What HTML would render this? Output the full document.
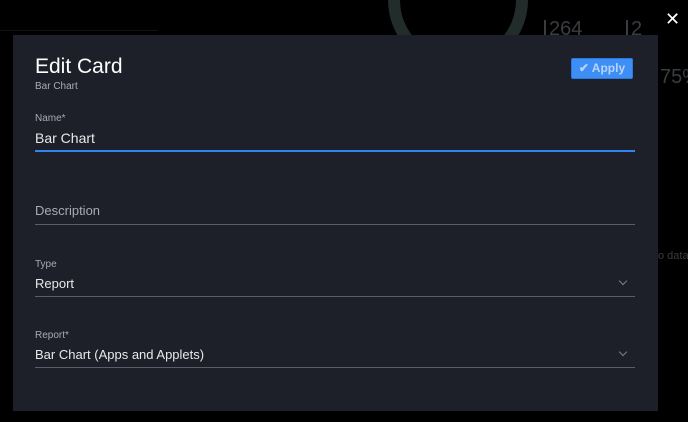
<!DOCTYPE html>
<html><head><style>
body{margin:0;width:688px;height:422px;background:#000;position:relative;overflow:hidden;font-family:"Liberation Sans",sans-serif;}
.dlg{position:absolute;left:13px;top:35px;width:645px;height:376px;background:#1d2029;}
.t{position:absolute;color:#fff;white-space:nowrap;}
.lab{position:absolute;left:22px;font-size:10px;color:#a8abb2;}
.val{position:absolute;left:22px;font-size:14px;color:#e8e9eb;}
.line{position:absolute;left:22px;width:600px;height:1px;background:#5a5e66;}
.chev{position:absolute;left:607px;width:5px;height:5px;border-right:1px solid #7a7e85;border-bottom:1px solid #7a7e85;transform:rotate(45deg);}
</style></head><body>
<div style="position:absolute;left:388px;top:-70px;width:116px;height:116px;border:12px solid #222c2b;border-radius:50%;"></div>
<div style="position:absolute;left:0;top:30px;width:158px;height:1px;background:#1a1010"></div>
<div style="position:absolute;left:544px;top:20px;width:2px;height:20px;background:#3a3d40"></div>
<div class="t" style="left:549px;top:18px;font-size:20px;color:#3a3d40">264</div>
<div style="position:absolute;left:626px;top:20px;width:2px;height:20px;background:#3a3d40"></div>
<div class="t" style="left:631px;top:18px;font-size:20px;color:#3a3d40">2</div>
<div class="t" style="left:660px;top:66px;font-size:20px;color:#3a3d40">75%</div>
<div class="t" style="left:658px;top:250px;font-size:11px;color:#3a3d40">o data</div>
<div class="t" style="left:665px;top:9px;font-size:18px;color:#fff;">✕</div>
<div class="dlg">
<div class="t" style="left:22px;top:20px;font-size:21px;">Edit Card</div>
<div class="t" style="left:22px;top:46px;font-size:10px;color:#a8abb2">Bar Chart</div>
<div style="position:absolute;left:558px;top:23px;width:62px;height:21px;background:#3d8ef5;border:1px solid #2a78e0;border-radius:2px;box-sizing:border-box;color:#b8d4fa;font-weight:bold;font-size:12px;line-height:19px;text-align:center;">✔ Apply</div>
<div class="lab" style="top:78px">Name*</div>
<div class="val" style="top:95px">Bar Chart</div>
<div class="line" style="top:115px;height:2px;background:#2f86ee"></div>
<div class="val" style="top:168px;color:#a8abb2;font-size:13px">Description</div>
<div class="line" style="top:189px"></div>
<div class="lab" style="top:224px">Type</div>
<div class="val" style="top:241px;font-size:13px">Report</div>
<div class="chev" style="top:243px"></div>
<div class="line" style="top:261px"></div>
<div class="lab" style="top:295px">Report*</div>
<div class="val" style="top:312px;font-size:13px">Bar Chart (Apps and Applets)</div>
<div class="chev" style="top:314px"></div>
<div class="line" style="top:332px"></div>
</div>
</body></html>
